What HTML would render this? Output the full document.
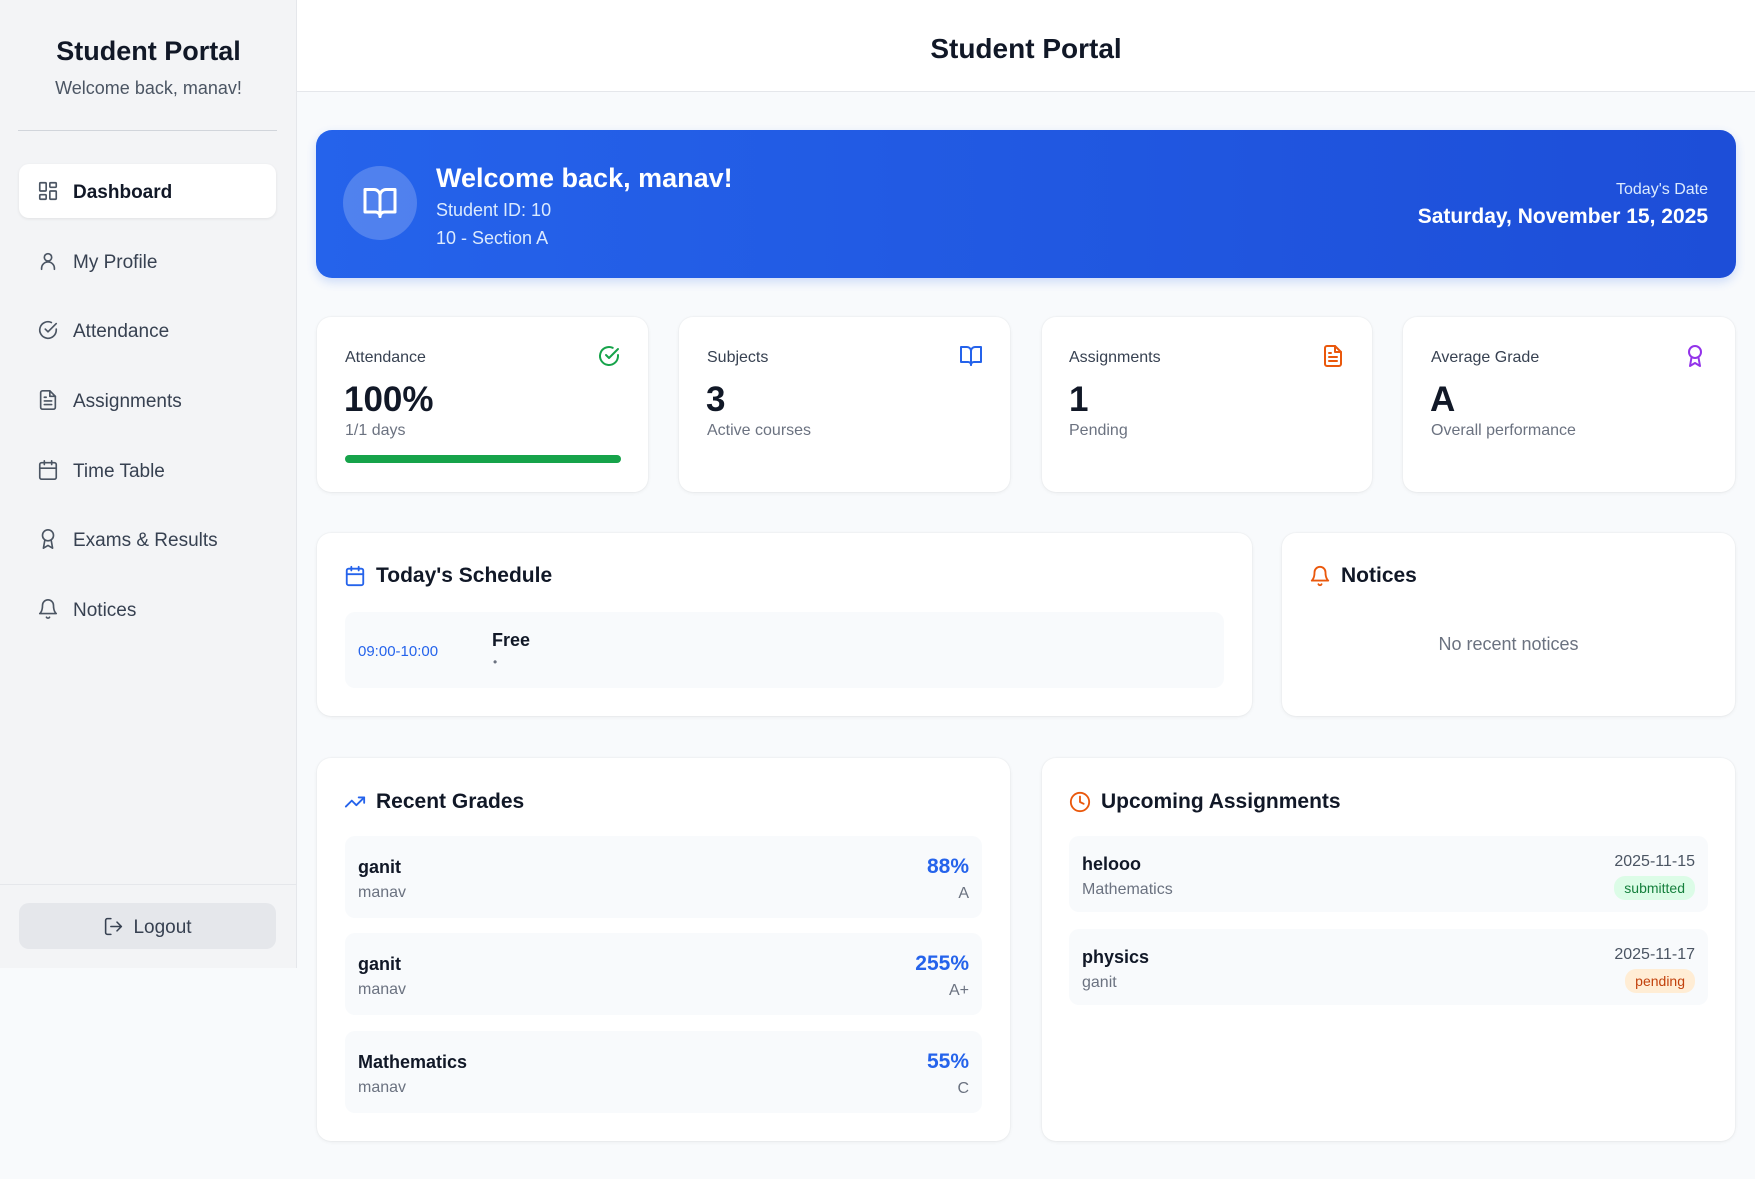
<!DOCTYPE html>
<html><head><meta charset="utf-8"><style>
*{box-sizing:border-box;margin:0;padding:0}
body{width:1755px;height:1179px;position:relative;background:#f8fafc;font-family:"Liberation Sans",sans-serif;color:#111827;overflow:hidden}
.a{position:absolute;white-space:nowrap}
.sb{position:absolute;left:0;top:0;width:297px;height:968px;background:#f3f4f6;border-right:1px solid #e5e7eb}
.nav{position:absolute;left:19px;width:257px;height:54px;display:flex;align-items:center;padding-left:18px;padding-top:4px;font-size:19px;color:#374151;border-radius:10px}
.nav svg{width:22px;height:22px;margin-right:14px;margin-top:-4px;fill:none;stroke:#4b5563;stroke-width:1.8;stroke-linecap:round;stroke-linejoin:round}
.nav.act{background:#fff;box-shadow:0 1px 3px rgba(0,0,0,.08);color:#111827;font-weight:600}
.card{position:absolute;background:#fff;border-radius:14px;box-shadow:0 1px 4px rgba(0,0,0,.06),0 0 0 1px rgba(0,0,0,.02)}
.ic{fill:none;stroke-width:2;stroke-linecap:round;stroke-linejoin:round}
.lbl{font-size:16px;color:#374151}
.val{font-size:35px;font-weight:700;color:#111827}
.sub{font-size:16px;color:#6b7280}
.h{font-size:21px;font-weight:700;display:flex;align-items:center}
.h svg{margin-right:10px}
.item{position:absolute;background:#f8fafc;border-radius:10px}
</style></head><body>
<div class="sb">
<div class="a" style="left:0;width:297px;text-align:center;top:36px;font-size:27px;font-weight:700;color:#111827">Student Portal</div>
<div class="a" style="left:0;width:297px;text-align:center;top:78px;font-size:18px;color:#4b5563">Welcome back, manav!</div>
<div class="a" style="left:18px;top:130px;width:259px;height:1px;background:#d1d5db"></div>
<div class="nav act" style="top:164px"><svg viewBox="0 0 24 24"><rect x="3" y="3" width="7" height="9" rx="1"/><rect x="14" y="3" width="7" height="5" rx="1"/><rect x="14" y="12" width="7" height="9" rx="1"/><rect x="3" y="16" width="7" height="5" rx="1"/></svg>Dashboard</div>
<div class="nav" style="top:234px"><svg viewBox="0 0 24 24"><circle cx="12" cy="8" r="4"/><path d="M5 21v-1a7 7 0 0 1 14 0v1"/></svg>My Profile</div>
<div class="nav" style="top:303px"><svg viewBox="0 0 24 24"><path d="M21 11v1a9 9 0 1 1-5.3-8.2"/><path d="M9 11l3 3 9-9"/></svg>Attendance</div>
<div class="nav" style="top:373px"><svg viewBox="0 0 24 24"><path d="M14 2H6a2 2 0 0 0-2 2v16a2 2 0 0 0 2 2h12a2 2 0 0 0 2-2V8z"/><path d="M14 2v6h6M8 13h8M8 17h8M8 9h2"/></svg>Assignments</div>
<div class="nav" style="top:443px"><svg viewBox="0 0 24 24"><rect x="3" y="4" width="18" height="18" rx="2"/><path d="M16 2v4M8 2v4M3 10h18"/></svg>Time Table</div>
<div class="nav" style="top:512px"><svg viewBox="0 0 24 24"><circle cx="12" cy="8" r="6"/><path d="M15.5 13.5L17 22l-5-3-5 3 1.5-8.5"/></svg>Exams &amp; Results</div>
<div class="nav" style="top:582px"><svg viewBox="0 0 24 24"><path d="M6 8a6 6 0 0 1 12 0c0 7 3 9 3 9H3s3-2 3-9"/><path d="M10.3 21a1.9 1.9 0 0 0 3.4 0"/></svg>Notices</div>
<div class="a" style="left:0;top:884px;width:297px;height:1px;background:#e5e7eb"></div>
<div class="a" style="left:19px;top:903px;width:257px;height:46px;background:#e5e7eb;border-radius:10px;display:flex;align-items:center;justify-content:center;padding-top:3px;font-size:19px;color:#374151"><svg viewBox="0 0 24 24" width="21" height="21" style="margin-right:9px;margin-top:-3px;fill:none;stroke:#374151;stroke-width:1.8;stroke-linecap:round;stroke-linejoin:round"><path d="M9 21H5a2 2 0 0 1-2-2V5a2 2 0 0 1 2-2h4M16 17l5-5-5-5M21 12H9"/></svg>Logout</div>
</div>
<div class="a" style="left:297px;top:0;width:1458px;height:92px;background:#fff;border-bottom:1px solid #e5e7eb;text-align:center;line-height:92px;font-size:28px;font-weight:700;padding-top:3px">Student Portal</div>

<div class="a" style="left:316px;top:130px;width:1420px;height:148px;border-radius:16px;background:linear-gradient(90deg,#2563eb,#1d4ed8);box-shadow:0 4px 10px rgba(37,99,235,.2)"></div>
<div class="a" style="left:343px;top:166px;width:74px;height:74px;border-radius:50%;background:rgba(255,255,255,.2);display:flex;align-items:center;justify-content:center"><svg viewBox="0 0 24 24" width="36" height="36" class="ic" style="stroke:#fff"><path d="M2 3h6a4 4 0 0 1 4 4v14a3 3 0 0 0-3-3H2z"/><path d="M22 3h-6a4 4 0 0 0-4 4v14a3 3 0 0 1 3-3h7z"/></svg></div>
<div class="a" style="left:436px;top:163px;font-size:27px;font-weight:700;color:#fff">Welcome back, manav!</div>
<div class="a" style="left:436px;top:200px;font-size:18px;color:#dbeafe">Student ID: 10</div>
<div class="a" style="left:436px;top:228px;font-size:18px;color:#dbeafe">10 - Section A</div>
<div class="a" style="right:47px;top:181px;font-size:16px;color:#dbeafe;text-align:right">Today's Date</div>
<div class="a" style="right:47px;top:205px;font-size:21px;font-weight:700;color:#fff;text-align:right">Saturday, November 15, 2025</div>

<div class="card" style="left:317px;top:317px;width:331px;height:175px">
<div class="a lbl" style="left:28px;top:32px">Attendance</div>
<svg class="a ic" style="left:280px;top:27px;stroke:#16a34a" width="24" height="24" viewBox="0 0 24 24"><path d="M21 11v1a9 9 0 1 1-5.3-8.2"/><path d="M9 11l3 3 9-9"/></svg>
<div class="a val" style="left:27px;top:63px">100%</div>
<div class="a sub" style="left:28px;top:105px">1/1 days</div>
<div class="a" style="left:28px;top:138px;width:276px;height:8px;border-radius:4px;background:#16a34a"></div>
</div>
<div class="card" style="left:679px;top:317px;width:331px;height:175px">
<div class="a lbl" style="left:28px;top:32px">Subjects</div>
<svg class="a ic" style="left:280px;top:27px;stroke:#2563eb" width="24" height="24" viewBox="0 0 24 24"><path d="M2 3h6a4 4 0 0 1 4 4v14a3 3 0 0 0-3-3H2z"/><path d="M22 3h-6a4 4 0 0 0-4 4v14a3 3 0 0 1 3-3h7z"/></svg>
<div class="a val" style="left:27px;top:63px">3</div>
<div class="a sub" style="left:28px;top:105px">Active courses</div>
</div>
<div class="card" style="left:1042px;top:317px;width:330px;height:175px">
<div class="a lbl" style="left:27px;top:32px">Assignments</div>
<svg class="a ic" style="left:279px;top:27px;stroke:#ea580c" width="24" height="24" viewBox="0 0 24 24"><path d="M14 2H6a2 2 0 0 0-2 2v16a2 2 0 0 0 2 2h12a2 2 0 0 0 2-2V8z"/><path d="M14 2v6h6M8 13h8M8 17h8M8 9h2"/></svg>
<div class="a val" style="left:27px;top:63px">1</div>
<div class="a sub" style="left:27px;top:105px">Pending</div>
</div>
<div class="card" style="left:1403px;top:317px;width:332px;height:175px">
<div class="a lbl" style="left:28px;top:32px">Average Grade</div>
<svg class="a ic" style="left:280px;top:27px;stroke:#9333ea" width="24" height="24" viewBox="0 0 24 24"><circle cx="12" cy="8" r="6"/><path d="M15.5 13.5L17 22l-5-3-5 3 1.5-8.5"/></svg>
<div class="a val" style="left:27px;top:63px">A</div>
<div class="a sub" style="left:28px;top:105px">Overall performance</div>
</div>

<div class="card" style="left:317px;top:533px;width:935px;height:183px">
<div class="a h" style="left:27px;top:31px"><svg class="ic" style="stroke:#2563eb" width="22" height="22" viewBox="0 0 24 24"><rect x="3" y="4" width="18" height="18" rx="2"/><path d="M16 2v4M8 2v4M3 10h18"/></svg>Today's Schedule</div>
<div class="item" style="left:28px;top:79px;width:879px;height:76px">
<div class="a" style="left:13px;top:31px;font-size:15px;color:#2563eb">09:00-10:00</div>
<div class="a" style="left:147px;top:18px;font-size:18px;font-weight:600">Free</div>
<div class="a" style="left:148px;top:43px;font-size:12px;color:#6b7280">•</div>
</div>
</div>
<div class="card" style="left:1282px;top:533px;width:453px;height:183px">
<div class="a h" style="left:27px;top:31px"><svg class="ic" style="stroke:#ea580c" width="22" height="22" viewBox="0 0 24 24"><path d="M6 8a6 6 0 0 1 12 0c0 7 3 9 3 9H3s3-2 3-9"/><path d="M10.3 21a1.9 1.9 0 0 0 3.4 0"/></svg>Notices</div>
<div class="a" style="left:0;width:453px;text-align:center;top:101px;font-size:18px;color:#6b7280">No recent notices</div>
</div>

<div class="card" style="left:317px;top:758px;width:693px;height:383px">
<div class="a h" style="left:27px;top:32px"><svg class="ic" style="stroke:#2563eb" width="22" height="22" viewBox="0 0 24 24"><path d="M22 7l-8.5 8.5-5-5L2 17"/><path d="M16 7h6v6"/></svg>Recent Grades</div>
<div class="item" style="left:28px;top:78px;width:637px;height:82px"><div class="a" style="left:13px;top:21px;font-size:18px;font-weight:600">ganit</div><div class="a sub" style="left:13px;top:48px">manav</div><div class="a" style="right:13px;top:19px;font-size:21px;font-weight:700;color:#2563eb">88%</div><div class="a sub" style="right:13px;top:49px">A</div></div>
<div class="item" style="left:28px;top:175px;width:637px;height:82px"><div class="a" style="left:13px;top:21px;font-size:18px;font-weight:600">ganit</div><div class="a sub" style="left:13px;top:48px">manav</div><div class="a" style="right:13px;top:19px;font-size:21px;font-weight:700;color:#2563eb">255%</div><div class="a sub" style="right:13px;top:49px">A+</div></div>
<div class="item" style="left:28px;top:273px;width:637px;height:82px"><div class="a" style="left:13px;top:21px;font-size:18px;font-weight:600">Mathematics</div><div class="a sub" style="left:13px;top:48px">manav</div><div class="a" style="right:13px;top:19px;font-size:21px;font-weight:700;color:#2563eb">55%</div><div class="a sub" style="right:13px;top:49px">C</div></div>
</div>
<div class="card" style="left:1042px;top:758px;width:693px;height:383px">
<div class="a h" style="left:27px;top:32px"><svg class="ic" style="stroke:#ea580c" width="22" height="22" viewBox="0 0 24 24"><circle cx="12" cy="12" r="10"/><path d="M12 6v6l4 2"/></svg>Upcoming Assignments</div>
<div class="item" style="left:27px;top:78px;width:639px;height:76px"><div class="a" style="left:13px;top:18px;font-size:18px;font-weight:600">helooo</div><div class="a sub" style="left:13px;top:45px">Mathematics</div><div class="a" style="right:13px;top:17px;font-size:16px;color:#4b5563">2025-11-15</div><div class="a" style="right:13px;top:40px;font-size:14px;color:#15803d;background:#dcfce7;border-radius:11px;padding:4px 10px">submitted</div></div>
<div class="item" style="left:27px;top:171px;width:639px;height:76px"><div class="a" style="left:13px;top:18px;font-size:18px;font-weight:600">physics</div><div class="a sub" style="left:13px;top:45px">ganit</div><div class="a" style="right:13px;top:17px;font-size:16px;color:#4b5563">2025-11-17</div><div class="a" style="right:13px;top:40px;font-size:14px;color:#c2410c;background:#ffedd5;border-radius:11px;padding:4px 10px">pending</div></div>
</div>
</body></html>
